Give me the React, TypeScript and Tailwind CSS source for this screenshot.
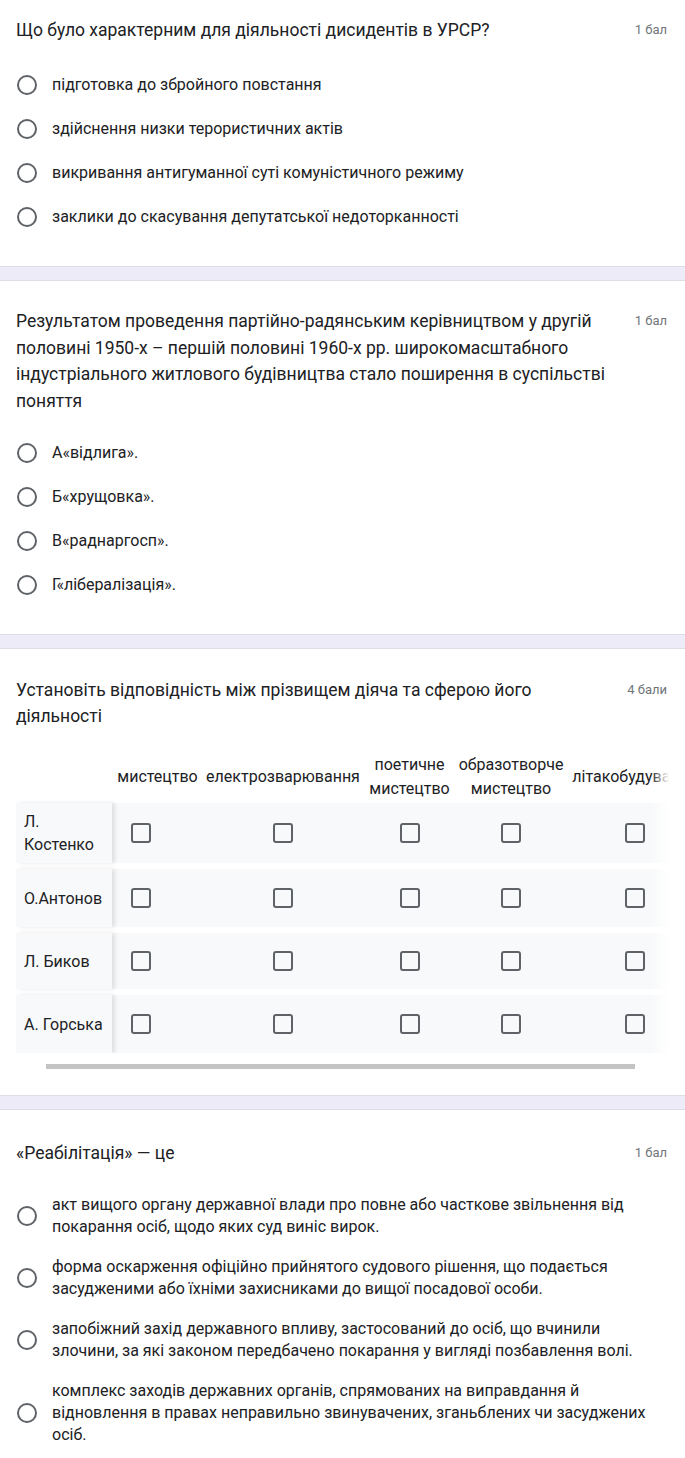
import React from 'react';

const RADIO = 'shrink-0 w-5 h-5 rounded-full border-2 border-[#5f6368]';

const Band = () => <div className="h-[15px] bg-[#ecebf7] border-y border-[#dedde6]" />;

const Points = ({ children }: { children: React.ReactNode }) => (
  <span className="shrink-0 text-[13px] leading-[26px] text-[#70757a]">{children}</span>
);

const Option = ({ label }: { label: string }) => (
  <div className="flex items-center h-[44px] gap-[15px]">
    <span className={`${RADIO} ml-px`} />
    <span className="text-[16px] text-[#202124]">{label}</span>
  </div>
);

const LongOption = ({ label }: { label: string }) => (
  <div className="flex items-center gap-[15px]">
    <span className={`${RADIO} ml-px`} />
    <span className="text-[16px] leading-[22px] text-[#202124] pr-[10px]">{label}</span>
  </div>
);

const COLS = [
  { title: 'мистецтво', w: 'w-[91px]', box: 'justify-start pl-[19px]', nowrap: true },
  { title: 'електрозварювання', w: 'w-[160px]', box: 'justify-center', nowrap: true },
  { title: 'поетичне мистецтво', w: 'w-[93px]', box: 'justify-center', nowrap: false },
  { title: 'образотворче мистецтво', w: 'w-[110px]', box: 'justify-center', nowrap: false },
  { title: 'літакобудування', w: 'w-[138px]', box: 'justify-center', nowrap: true },
];

const ROWS = [
  { name: 'Л. Костенко', h: 'h-[60px]' },
  { name: 'О.Антонов', h: 'h-[58px]' },
  { name: 'Л. Биков', h: 'h-[56px]' },
  { name: 'А. Горська', h: 'h-[58px]' },
];

const Grid = () => (
  <div className="relative mt-[22px] overflow-hidden">
    {/* header */}
    <div className="flex h-[52px] items-center">
      <div className="w-[96px] shrink-0" />
      {COLS.map((c) => (
        <div
          key={c.title}
          className={`${c.w} shrink-0 text-center text-[16px] leading-[24px] text-[#202124] ${c.nowrap ? 'whitespace-nowrap' : ''}`}
        >
          {c.title}
        </div>
      ))}
    </div>

    {/* rows */}
    <div className="flex flex-col gap-[6px]">
      {ROWS.map((r) => (
        <div key={r.name} className={`flex ${r.h} bg-[#f8f9fa]`}>
          <div className="relative z-10 w-[96px] shrink-0 flex items-center pl-2 pr-1 bg-[#f8f9fa] shadow-[3px_0_4px_rgba(0,0,0,0.10)] text-[16px] leading-[23px] text-[#202124]">
            {r.name}
          </div>
          {COLS.map((c) => (
            <div key={c.title} className={`${c.w} shrink-0 flex items-center ${c.box}`}>
              <span className="w-5 h-5 rounded-[3px] border-2 border-[#5f6368]" />
            </div>
          ))}
        </div>
      ))}
    </div>

    {/* right fade over the scrolled columns */}
    <div className="absolute right-0 top-0 bottom-0 w-[18px] bg-gradient-to-r from-white/0 to-white" />
  </div>
);

export default function App() {
  return (
    <div className="w-[685px] bg-white font-[Roboto,'Noto_Sans',sans-serif] text-[#202124]">
      {/* Q1 */}
      <section className="pl-4 pr-[18px] pt-[17px] pb-[27px]">
        <div className="flex items-start justify-between gap-6">
          <h2 className="text-[17.5px] leading-[26px]">Що було характерним для діяльності дисидентів в УРСР?</h2>
          <Points>1 бал</Points>
        </div>
        <div className="mt-[20px]">
          <Option label="підготовка до збройного повстання" />
          <Option label="здійснення низки терористичних актів" />
          <Option label="викривання антигуманної суті комуністичного режиму" />
          <Option label="заклики до скасування депутатської недоторканності" />
        </div>
      </section>

      <Band />

      {/* Q2 */}
      <section className="pl-4 pr-[18px] pt-[27px] pb-[27px]">
        <div className="flex items-start justify-between gap-4">
          <h2 className="text-[17.5px] leading-[26.5px] max-w-[600px]">
            Результатом проведення партійно-радянським керівництвом у другій половині 1950-х – першій половині
            1960-х рр. широкомасштабного індустріального житлового будівництва стало поширення в суспільстві
            поняття
          </h2>
          <Points>1 бал</Points>
        </div>
        <div className="mt-[17px]">
          <Option label="А«відлига»." />
          <Option label="Б«хрущовка»." />
          <Option label="В«раднаргосп»." />
          <Option label="Г«лібералізація»." />
        </div>
      </section>

      <Band />

      {/* Q3 */}
      <section className="pl-4 pr-4 pt-[28px] pb-[26px]">
        <div className="flex items-start justify-between gap-6 pr-[2px]">
          <h2 className="text-[17.5px] leading-[26px] max-w-[545px]">
            Установіть відповідність між прізвищем діяча та сферою його діяльності
          </h2>
          <Points>4 бали</Points>
        </div>
        <Grid />
        <div className="mt-[11px] ml-[30px] w-[589px] h-[5px] bg-[#c4c4c4]" />
      </section>

      <Band />

      {/* Q4 */}
      <section className="pl-4 pr-[18px] pt-[30px] pb-[16px]">
        <div className="flex items-start justify-between gap-6">
          <h2 className="text-[17.5px] leading-[26px]">«Реабілітація» — це</h2>
          <Points>1 бал</Points>
        </div>
        <div className="mt-[28px] flex flex-col gap-[18px]">
          <LongOption label="акт вищого органу державної влади про повне або часткове звільнення від покарання осіб, щодо яких суд виніс вирок." />
          <LongOption label="форма оскарження офіційно прийнятого судового рішення, що подається засудженими або їхніми захисниками до вищої посадової особи." />
          <LongOption label="запобіжний захід державного впливу, застосований до осіб, що вчинили злочини, за які законом передбачено покарання у вигляді позбавлення волі." />
          <LongOption label="комплекс заходів державних органів, спрямованих на виправдання й відновлення в правах неправильно звинувачених, зганьблених чи засуджених осіб." />
        </div>
      </section>
    </div>
  );
}
